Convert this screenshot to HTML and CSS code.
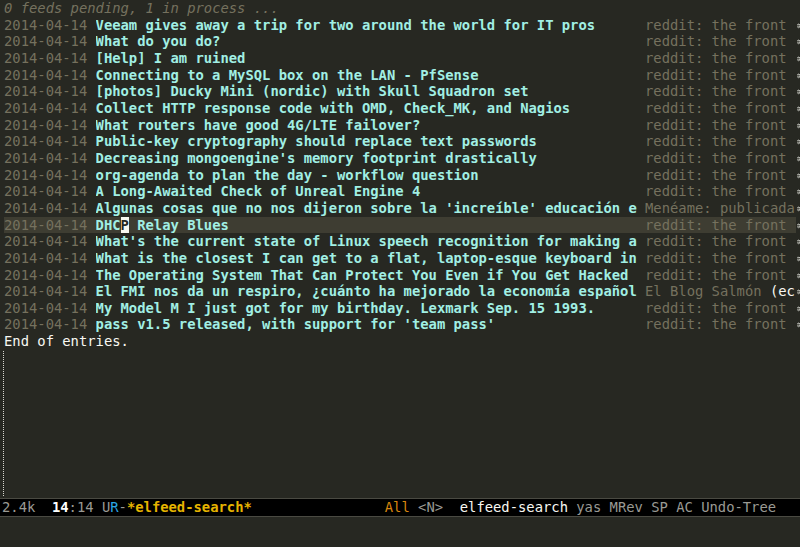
FILE: index.html
```html
<!DOCTYPE html>
<html>
<head>
<meta charset="utf-8">
<link rel="stylesheet" href="styles.css">
</head>
<body>
<div class="frame">
  <div class="window">
    <div class="line"><div class="text"><span class="header">0 feeds pending, 1 in process ...</span></div><div class="rfringe"></div></div>

    <div class="line"><div class="text entry"><span class="date">2014-04-14</span><span class="title">Veeam gives away a trip for two around the world for IT pros</span><span class="feed">reddit: the front </span></div><div class="rfringe"><svg class="arrow" viewBox="0 0 5 17" width="5" height="17"><path d="M0 7.5H5M0 10.5H5M2 6L4 8M2 12L4 10" stroke="#f8f8f2" stroke-width="1" fill="none"/></svg></div></div>
    <div class="line"><div class="text entry"><span class="date">2014-04-14</span><span class="title">What do you do?</span><span class="feed">reddit: the front </span></div><div class="rfringe"><svg class="arrow" viewBox="0 0 5 17" width="5" height="17"><path d="M0 7.5H5M0 10.5H5M2 6L4 8M2 12L4 10" stroke="#f8f8f2" stroke-width="1" fill="none"/></svg></div></div>
    <div class="line"><div class="text entry"><span class="date">2014-04-14</span><span class="title">[Help] I am ruined</span><span class="feed">reddit: the front </span></div><div class="rfringe"><svg class="arrow" viewBox="0 0 5 17" width="5" height="17"><path d="M0 7.5H5M0 10.5H5M2 6L4 8M2 12L4 10" stroke="#f8f8f2" stroke-width="1" fill="none"/></svg></div></div>
    <div class="line"><div class="text entry"><span class="date">2014-04-14</span><span class="title">Connecting to a MySQL box on the LAN - PfSense</span><span class="feed">reddit: the front </span></div><div class="rfringe"><svg class="arrow" viewBox="0 0 5 17" width="5" height="17"><path d="M0 7.5H5M0 10.5H5M2 6L4 8M2 12L4 10" stroke="#f8f8f2" stroke-width="1" fill="none"/></svg></div></div>
    <div class="line"><div class="text entry"><span class="date">2014-04-14</span><span class="title">[photos] Ducky Mini (nordic) with Skull Squadron set</span><span class="feed">reddit: the front </span></div><div class="rfringe"><svg class="arrow" viewBox="0 0 5 17" width="5" height="17"><path d="M0 7.5H5M0 10.5H5M2 6L4 8M2 12L4 10" stroke="#f8f8f2" stroke-width="1" fill="none"/></svg></div></div>
    <div class="line"><div class="text entry"><span class="date">2014-04-14</span><span class="title">Collect HTTP response code with OMD, Check_MK, and Nagios</span><span class="feed">reddit: the front </span></div><div class="rfringe"><svg class="arrow" viewBox="0 0 5 17" width="5" height="17"><path d="M0 7.5H5M0 10.5H5M2 6L4 8M2 12L4 10" stroke="#f8f8f2" stroke-width="1" fill="none"/></svg></div></div>
    <div class="line"><div class="text entry"><span class="date">2014-04-14</span><span class="title">What routers have good 4G/LTE failover?</span><span class="feed">reddit: the front </span></div><div class="rfringe"><svg class="arrow" viewBox="0 0 5 17" width="5" height="17"><path d="M0 7.5H5M0 10.5H5M2 6L4 8M2 12L4 10" stroke="#f8f8f2" stroke-width="1" fill="none"/></svg></div></div>
    <div class="line"><div class="text entry"><span class="date">2014-04-14</span><span class="title">Public-key cryptography should replace text passwords</span><span class="feed">reddit: the front </span></div><div class="rfringe"><svg class="arrow" viewBox="0 0 5 17" width="5" height="17"><path d="M0 7.5H5M0 10.5H5M2 6L4 8M2 12L4 10" stroke="#f8f8f2" stroke-width="1" fill="none"/></svg></div></div>
    <div class="line"><div class="text entry"><span class="date">2014-04-14</span><span class="title">Decreasing mongoengine's memory footprint drastically</span><span class="feed">reddit: the front </span></div><div class="rfringe"><svg class="arrow" viewBox="0 0 5 17" width="5" height="17"><path d="M0 7.5H5M0 10.5H5M2 6L4 8M2 12L4 10" stroke="#f8f8f2" stroke-width="1" fill="none"/></svg></div></div>
    <div class="line"><div class="text entry"><span class="date">2014-04-14</span><span class="title">org-agenda to plan the day - workflow question</span><span class="feed">reddit: the front </span></div><div class="rfringe"><svg class="arrow" viewBox="0 0 5 17" width="5" height="17"><path d="M0 7.5H5M0 10.5H5M2 6L4 8M2 12L4 10" stroke="#f8f8f2" stroke-width="1" fill="none"/></svg></div></div>
    <div class="line"><div class="text entry"><span class="date">2014-04-14</span><span class="title">A Long-Awaited Check of Unreal Engine 4</span><span class="feed">reddit: the front </span></div><div class="rfringe"><svg class="arrow" viewBox="0 0 5 17" width="5" height="17"><path d="M0 7.5H5M0 10.5H5M2 6L4 8M2 12L4 10" stroke="#f8f8f2" stroke-width="1" fill="none"/></svg></div></div>
    <div class="line"><div class="text entry"><span class="date">2014-04-14</span><span class="title">Algunas cosas que no nos dijeron sobre la 'increíble' educación e</span><span class="feed">Menéame: publicada</span></div><div class="rfringe"><svg class="arrow" viewBox="0 0 5 17" width="5" height="17"><path d="M0 7.5H5M0 10.5H5M2 6L4 8M2 12L4 10" stroke="#f8f8f2" stroke-width="1" fill="none"/></svg></div></div>
    <div class="line"><div class="text entry current"><span class="date">2014-04-14</span><span class="title">DHC<span class="cursor">P</span> Relay Blues</span><span class="feed">reddit: the front </span></div><div class="rfringe"><svg class="arrow" viewBox="0 0 5 17" width="5" height="17"><path d="M0 7.5H5M0 10.5H5M2 6L4 8M2 12L4 10" stroke="#f8f8f2" stroke-width="1" fill="none"/></svg></div></div>
    <div class="line"><div class="text entry"><span class="date">2014-04-14</span><span class="title">What's the current state of Linux speech recognition for making a</span><span class="feed">reddit: the front </span></div><div class="rfringe"><svg class="arrow" viewBox="0 0 5 17" width="5" height="17"><path d="M0 7.5H5M0 10.5H5M2 6L4 8M2 12L4 10" stroke="#f8f8f2" stroke-width="1" fill="none"/></svg></div></div>
    <div class="line"><div class="text entry"><span class="date">2014-04-14</span><span class="title">What is the closest I can get to a flat, laptop-esque keyboard in</span><span class="feed">reddit: the front </span></div><div class="rfringe"><svg class="arrow" viewBox="0 0 5 17" width="5" height="17"><path d="M0 7.5H5M0 10.5H5M2 6L4 8M2 12L4 10" stroke="#f8f8f2" stroke-width="1" fill="none"/></svg></div></div>
    <div class="line"><div class="text entry"><span class="date">2014-04-14</span><span class="title">The Operating System That Can Protect You Even if You Get Hacked</span><span class="feed">reddit: the front </span></div><div class="rfringe"><svg class="arrow" viewBox="0 0 5 17" width="5" height="17"><path d="M0 7.5H5M0 10.5H5M2 6L4 8M2 12L4 10" stroke="#f8f8f2" stroke-width="1" fill="none"/></svg></div></div>
    <div class="line"><div class="text entry"><span class="date">2014-04-14</span><span class="title">El FMI nos da un respiro, ¿cuánto ha mejorado la economía español</span><span class="feed">El Blog Salmón <span class="tags">(ec</span></span></div><div class="rfringe"><svg class="arrow" viewBox="0 0 5 17" width="5" height="17"><path d="M0 7.5H5M0 10.5H5M2 6L4 8M2 12L4 10" stroke="#f8f8f2" stroke-width="1" fill="none"/></svg></div></div>
    <div class="line"><div class="text entry"><span class="date">2014-04-14</span><span class="title">My Model M I just got for my birthday. Lexmark Sep. 15 1993.</span><span class="feed">reddit: the front </span></div><div class="rfringe"><svg class="arrow" viewBox="0 0 5 17" width="5" height="17"><path d="M0 7.5H5M0 10.5H5M2 6L4 8M2 12L4 10" stroke="#f8f8f2" stroke-width="1" fill="none"/></svg></div></div>
    <div class="line"><div class="text entry"><span class="date">2014-04-14</span><span class="title">pass v1.5 released, with support for 'team pass'</span><span class="feed">reddit: the front </span></div><div class="rfringe"><svg class="arrow" viewBox="0 0 5 17" width="5" height="17"><path d="M0 7.5H5M0 10.5H5M2 6L4 8M2 12L4 10" stroke="#f8f8f2" stroke-width="1" fill="none"/></svg></div></div>

    <div class="line"><div class="text"><span class="end">End of entries.</span></div><div class="rfringe"></div></div>
    <div class="empty"><div class="lfringe-marks"></div></div>
  </div>
  <div class="modeline"><span class="ml-dim">2.4k  </span><span class="ml-bold">14</span><span class="ml-dim">:14 U</span><span class="ml-blue">R</span><span class="ml-dim">-</span><span class="ml-buf">*elfeed-search*</span><span class="ml-gap"></span><span class="ml-orange">All</span><span class="ml-dim"> &lt;N&gt;  </span><span class="ml-white">elfeed-search</span><span class="ml-dim"> yas MRev SP AC Undo-Tree</span></div>
  <div class="echo"></div>
</div>
</body>
</html>
```

FILE: styles.css
```css
html, body {
  margin: 0;
  padding: 0;
  background: #272822;
}

.frame {
  width: 800px;
  height: 547px;
  display: flex;
  flex-direction: column;
  overflow: hidden;
  font-family: "DejaVu Sans Mono", monospace;
  font-size: 13.84px;
  line-height: 16.67px;
  color: #f8f8f2;
}

.window {
  height: 498px;
  display: flex;
  flex-direction: column;
  flex: none;
}

.line {
  display: flex;
  height: 16.67px;
  padding-left: 4px;
}

.text {
  width: 791.5px;
  flex: none;
  overflow: hidden;
  white-space: pre;
}

.rfringe {
  flex: 1;
  overflow: hidden;
  display: flex;
  align-items: flex-start;
}

.arrow {
  display: block;
  margin-left: 1px;
}

.entry {
  display: grid;
  grid-template-columns: 11ch 66ch 1fr;
}

.date { color: #75715e; }

.title {
  color: #a1efe4;
  font-weight: bold;
  overflow: hidden;
}

.feed {
  color: #75715e;
  overflow: hidden;
}

.tags { color: #f8f8f2; }

.current { background: #3e3d32; }

.cursor {
  background: #f8f8f0;
  color: #272822;
}

.header {
  color: #75715e;
  font-style: italic;
}

.end { color: #f8f8f2; }

.empty {
  flex: 1;
  padding-top: 1px;
  padding-left: 3px;
  display: flex;
}

.lfringe-marks {
  width: 0;
  height: 145px;
  border-left: 1px dotted #d8d8d0;
}

.modeline {
  flex: none;
  height: 16.67px;
  border-top: 1px solid #4a4a42;
  border-bottom: 1px solid #4a4a42;
  background: #000000;
  padding-left: 2px;
  display: flex;
  white-space: pre;
  color: #9a9a94;
}

.ml-dim { color: #9a9a94; }
.ml-bold { color: #ffffff; font-weight: bold; }
.ml-blue { color: #2aa7e6; }
.ml-buf { color: #e6b400; font-weight: bold; }
.ml-gap { width: 133px; }
.ml-orange { color: #d8860e; }
.ml-white { color: #f8f8f2; }

.echo {
  flex: 1;
}
```
